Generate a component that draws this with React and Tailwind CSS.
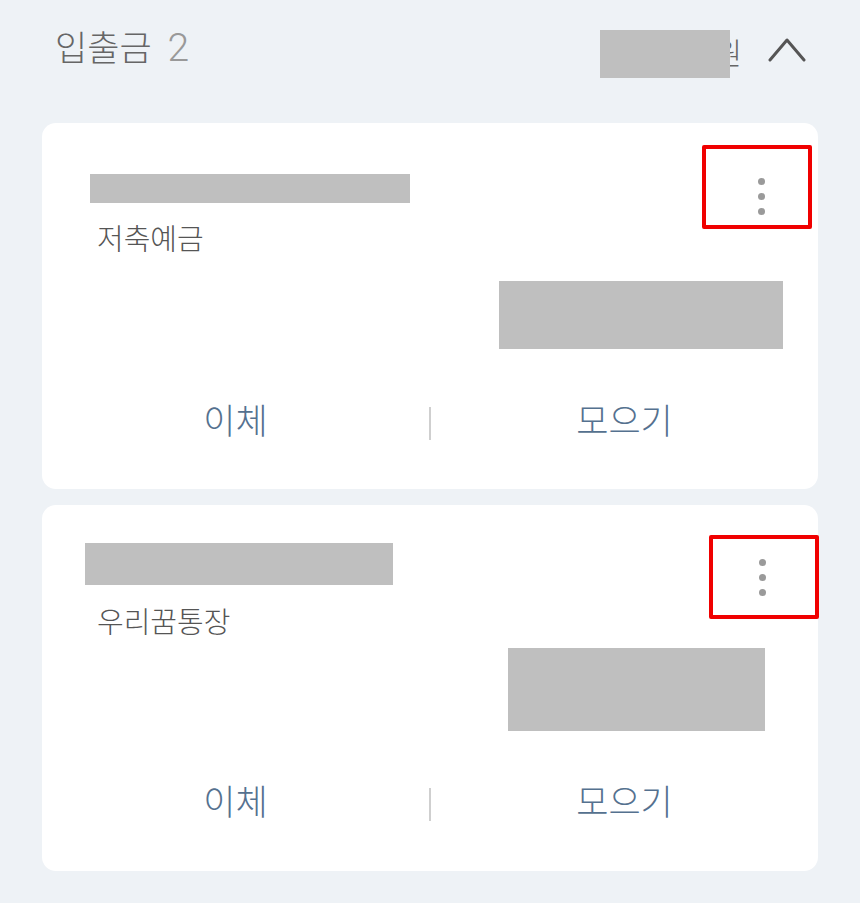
import React from 'react';

const font = { fontFamily: 'Roboto, "Noto Sans CJK KR", "Noto Sans", sans-serif' };

const accounts = [
  {
    id: 1,
    name: '저축예금',
    barClass: 'ml-[48px] mt-[51px] w-[320px] h-[29px]',
    labelClass: 'ml-[55px] mt-[18px]',
    boxClass: 'left-[660px] top-[22px]',
    dotsClass: 'pt-[29px] pl-[8px]',
    amountClass: 'mt-[22px] mr-[35px] w-[284px] h-[68px]',
    actionsClass: 'mt-[52px]',
  },
  {
    id: 2,
    name: '우리꿈통장',
    barClass: 'ml-[43px] mt-[38px] w-[308px] h-[42px]',
    labelClass: 'ml-[55px] mt-[19px]',
    boxClass: 'left-[667px] top-[30px]',
    dotsClass: 'pt-[20px] pr-[4px]',
    amountClass: 'mt-[6px] mr-[53px] w-[257px] h-[83px]',
    actionsClass: 'mt-[51px]',
  },
];

const AccountCard = ({ account }) => (
  <div className="relative bg-white rounded-[14px] h-[366px] flex flex-col">
    {/* 계좌번호 (가림) */}
    <div className={`bg-[#bfbfbf] ${account.barClass}`} />
    <div className={`text-[29px] leading-[38px] font-light text-[#555] ${account.labelClass}`}>{account.name}</div>

    {/* 잔액 (가림) */}
    <div className="flex justify-end">
      <div className={`bg-[#bfbfbf] ${account.amountClass}`} />
    </div>

    {/* 이체 / 모으기 */}
    <div className={`grid grid-cols-[1fr_auto_1fr] items-center ${account.actionsClass}`}>
      <button className="text-[35px] leading-[44px] font-light text-[#55718f] text-center">이체</button>
      <div className="w-[2px] h-[33px] bg-[#cfcfcf]" />
      <button className="text-[35px] leading-[44px] font-light text-[#55718f] text-center">모으기</button>
    </div>

    {/* 더보기 버튼 강조 */}
    <div className={`absolute w-[110px] h-[84px] border-[4px] border-[#f00000] rounded-[2px] flex flex-col items-center gap-[8px] ${account.boxClass} ${account.dotsClass}`}>
      <span className="w-[7px] h-[7px] rounded-full bg-[#9a9a9a]" />
      <span className="w-[7px] h-[7px] rounded-full bg-[#9a9a9a]" />
      <span className="w-[7px] h-[7px] rounded-full bg-[#9a9a9a]" />
    </div>
  </div>
);

export default function App() {
  return (
    <div className="w-[860px] h-[903px] bg-[#eef2f6] overflow-hidden" style={font}>
      {/* Header */}
      <div className="h-[123px] flex justify-between items-start pl-[55px] pr-[54px] pt-[24px]">
        <div className="flex items-baseline text-[35px] leading-[48px] font-light text-[#666]">
          <span>입출금</span>
          <span className="ml-[16px] text-[39px] text-[#999]">2</span>
        </div>
        <div className="flex items-start">
          <div className="relative mt-[6px] h-[48px] flex items-center">
            <span className="pl-[114px] text-[30px] leading-[48px] font-light text-[#666]">원</span>
            <div className="absolute left-0 top-0 w-[130px] h-[48px] bg-[#bfbfbf]" />
          </div>
          <svg className="ml-[26px] mt-[12px]" width="38" height="26" viewBox="0 0 38 26" fill="none">
            <polyline points="2,24 19,4 36,24" stroke="#555" strokeWidth="3" strokeLinecap="round" strokeLinejoin="round" />
          </svg>
        </div>
      </div>

      <div className="px-[42px] flex flex-col gap-[16px]">
        {accounts.map((a) => (
          <AccountCard key={a.id} account={a} />
        ))}
      </div>
    </div>
  );
}
